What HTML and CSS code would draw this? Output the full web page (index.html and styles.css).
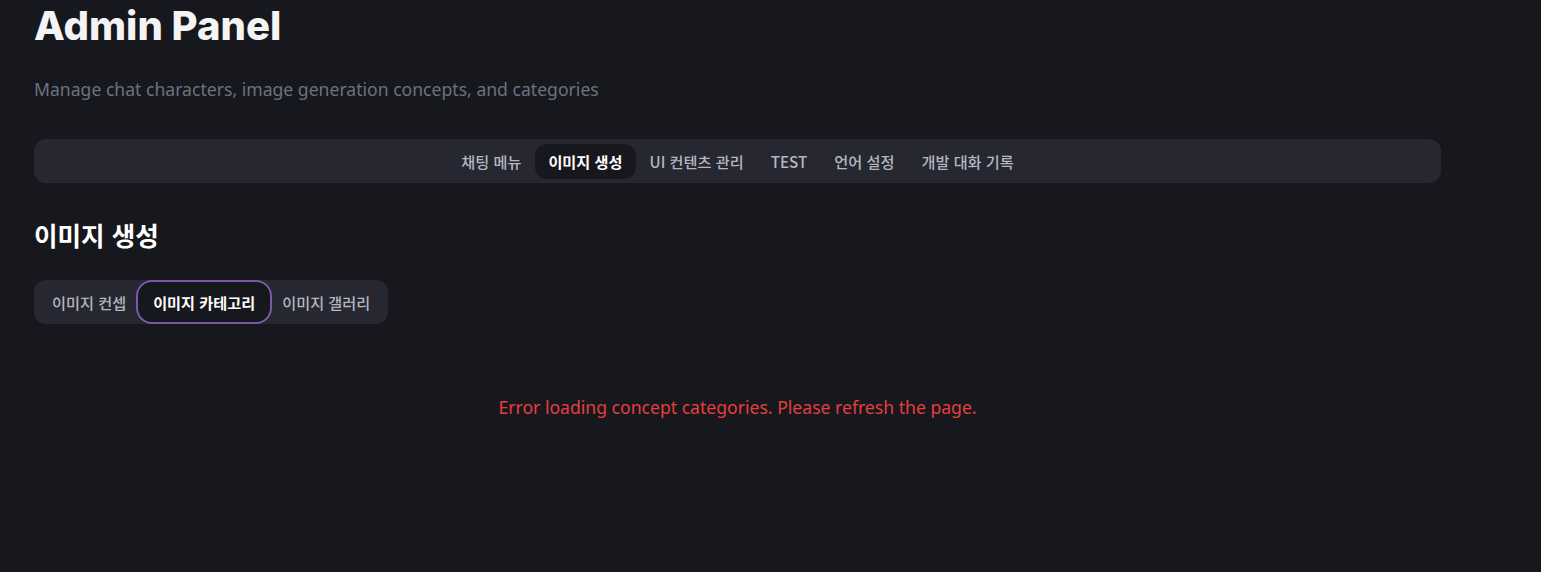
FILE: index.html
```html
<!DOCTYPE html>
<html lang="ko">
<head>
<meta charset="utf-8">
<title>Admin Panel</title>
<link rel="stylesheet" href="styles.css">
</head>
<body>
<div class="page">
  <header class="header">
    <h1 class="title">Admin Panel</h1>
    <p class="subtitle">Manage chat characters, image generation concepts, and categories</p>
  </header>
  <nav class="main-nav">
    <button class="nav-tab">채팅 메뉴</button>
    <button class="nav-tab active">이미지 생성</button>
    <button class="nav-tab">UI 컨텐츠 관리</button>
    <button class="nav-tab">TEST</button>
    <button class="nav-tab">언어 설정</button>
    <button class="nav-tab">개발 대화 기록</button>
  </nav>
  <section class="section">
    <h2 class="section-title">이미지 생성</h2>
    <div class="sub-nav">
      <button class="sub-tab">이미지 컨셉</button>
      <button class="sub-tab active">이미지 카테고리</button>
      <button class="sub-tab">이미지 갤러리</button>
    </div>
    <p class="error">Error loading concept categories. Please refresh the page.</p>
  </section>
</div>
</body>
</html>
```

FILE: styles.css
```css
html, body {
  margin: 0;
  padding: 0;
  background: #17181d;
  height: 100%;
}
body {
  font-family: "Noto Sans", "Noto Sans CJK KR", sans-serif;
  color: #e5e7eb;
}
.page {
  width: 1407px;
  padding-left: 34px;
}
.header {
  padding-top: 4px;
}
.title {
  margin: 0;
  font-family: "Inter", "Noto Sans", sans-serif;
  font-weight: 800;
  font-size: 40px;
  line-height: 44px;
  letter-spacing: 0;
  color: #f4f4f5;
}
.subtitle {
  margin: 27px 0 0;
  font-size: 17.6px;
  line-height: 28px;
  color: #6b7280;
}
.main-nav {
  margin-top: 36px;
  height: 44px;
  background: #262731;
  border-radius: 12px;
  display: flex;
  justify-content: center;
  align-items: center;
}
.nav-tab, .sub-tab {
  font-family: "Noto Sans CJK KR", "Noto Sans", sans-serif;
  background: transparent;
  border: 0;
  color: #b4b7c0;
  font-size: 15.2px;
  font-weight: 500;
  cursor: pointer;
}
.nav-tab {
  height: 35px;
  padding: 0 13.5px;
  border-radius: 12px;
}
.nav-tab.active {
  background: #17181d;
  color: #ffffff;
  font-weight: 700;
}
.section-title {
  margin: 36px 0 0;
  font-family: "Noto Sans CJK KR", sans-serif;
  font-size: 25.6px;
  line-height: 32px;
  font-weight: 700;
  color: #ffffff;
}
.sub-nav {
  margin-top: 29px;
  display: inline-flex;
  align-items: center;
  height: 44px;
  padding: 0 8px;
  background: #262731;
  border-radius: 12px;
}
.sub-tab {
  height: 44px;
  padding: 0 10px;
  border-radius: 16px;
}
.sub-tab.active {
  background: #17181d;
  border: 2px solid #7b58a8;
  color: #ffffff;
  font-weight: 700;
  padding: 0 15px;
}
.error {
  margin: 70px 0 0;
  text-align: center;
  color: #e53e3e;
  font-size: 17.6px;
  line-height: 26px;
}
```
